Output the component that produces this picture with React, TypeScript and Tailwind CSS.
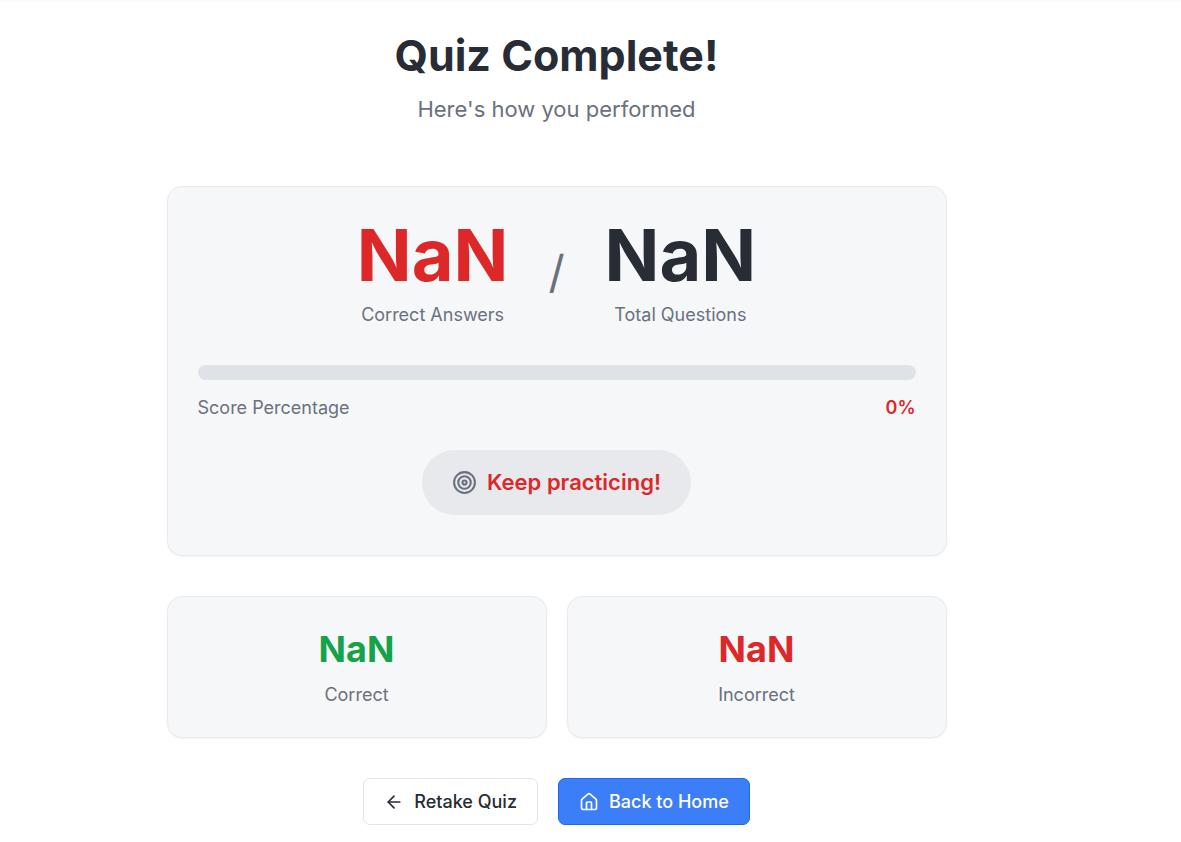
import { ArrowLeft, House, Target } from "lucide-react";

const labelClass = "text-[18px] leading-[25px] text-[#6a717d]";
const cardClass =
  "rounded-[15px] border border-[#e8eaed] bg-[#f6f7f9] shadow-[0_1px_2px_rgba(0,0,0,0.05)]";

function BigScore({ label, color }: { label: string; color: string }) {
  return (
    <div className="text-center">
      <div className={`text-[72px] leading-[75px] font-bold ${color}`}>NaN</div>
      <div className={`mt-2.5 ${labelClass}`}>{label}</div>
    </div>
  );
}

function StatCard({ label, color }: { label: string; color: string }) {
  return (
    <div className={`p-[30px] text-center ${cardClass}`}>
      <div className={`text-[36px] leading-[45px] font-bold ${color}`}>NaN</div>
      <div className={`mt-2.5 ${labelClass}`}>{label}</div>
    </div>
  );
}

export default function App() {
  return (
    <div className="min-h-screen border-t-2 border-[#fbfbfb] bg-white font-['Inter',sans-serif] text-[#272c35]">
      <main className="mr-[68px] px-5 pt-7">
        <div className="mx-auto max-w-[780px]">
          <header className="text-center">
            <h1 className="text-[43px] leading-[50px] font-bold">Quiz Complete!</h1>
            <p className="mt-3 text-[22px] leading-[35px] text-[#6a717d]">Here's how you performed</p>
          </header>

          <section className={`mt-[59px] px-[30px] pt-[30px] pb-10 ${cardClass}`}>
            <div className="flex items-center justify-center gap-10">
              <BigScore label="Correct Answers" color="text-[#dc2828]" />
              <div className="text-[45px] leading-[50px] text-[#6a717d]">/</div>
              <BigScore label="Total Questions" color="text-[#272c35]" />
            </div>
            <div
              role="progressbar"
              aria-label="Score Percentage"
              aria-valuenow={0}
              className="mt-[38px] h-[15px] rounded-full bg-[#dfe2e7]"
            />
            <div className="mt-[15px] flex justify-between">
              <span className={labelClass}>Score Percentage</span>
              <span className="text-[18px] leading-[25px] font-semibold text-[#dc2828]">0%</span>
            </div>
            <div className="mt-[30px] flex justify-center">
              <div className="flex items-center gap-2.5 rounded-full bg-[#e8e9ec] px-[30px] py-[15px]">
                <Target className="size-[25px] text-[#6a717d]" />
                <span className="text-[22px] leading-[35px] font-semibold text-[#dc2828]">Keep practicing!</span>
              </div>
            </div>
          </section>

          <div className="mt-10 grid grid-cols-2 gap-5">
            <StatCard label="Correct" color="text-[#16a249]" />
            <StatCard label="Incorrect" color="text-[#dc2828]" />
          </div>

          <div className="mt-10 flex justify-center gap-5 text-[18px] leading-[25px] font-medium">
            <button className="flex items-center gap-2.5 rounded-[7px] border border-[#e1e4e8] bg-white px-5 py-2.5">
              <ArrowLeft className="size-5" />
              Retake Quiz
            </button>
            <button className="flex items-center gap-2.5 rounded-[7px] border border-[#1d66f3] bg-[#3c7ef7] px-5 py-2.5 text-white">
              <House className="size-5" />
              Back to Home
            </button>
          </div>
        </div>
      </main>
    </div>
  );
}
